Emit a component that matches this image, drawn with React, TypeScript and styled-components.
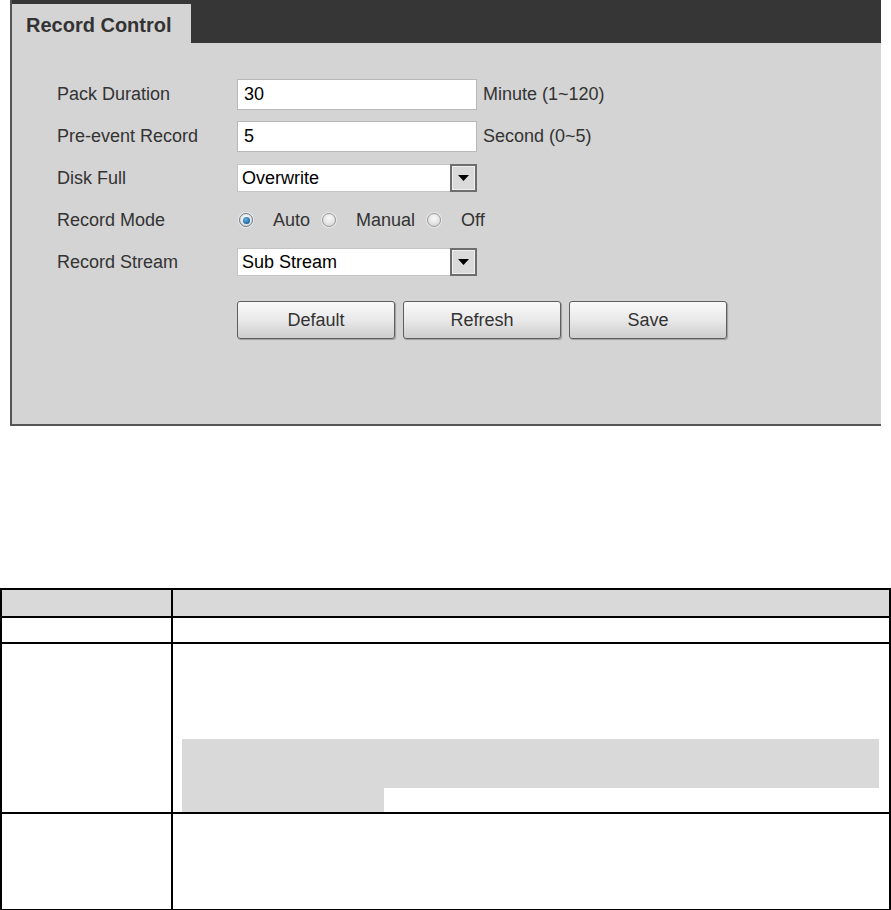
import React from "react";
import styled, { createGlobalStyle } from "styled-components";

const GlobalStyle = createGlobalStyle`
  html, body {
    margin: 0;
    padding: 0;
    background: #ffffff;
  }
  body {
    font-family: "Liberation Sans", Arial, sans-serif;
  }
`;

const Page = styled.div`
  width: 891px;
  display: flex;
  flex-direction: column;
`;

const Panel = styled.div`
  margin-left: 10px;
  width: 869px;
  background: #d4d4d4;
  border-left: 2px solid #555555;
  border-bottom: 2px solid #555555;
  padding-bottom: 85px;
`;

const TabBar = styled.div`
  display: flex;
  align-items: flex-end;
  height: 43px;
  background: #363636;
`;

const Tab = styled.div`
  display: flex;
  align-items: center;
  box-sizing: border-box;
  width: 179px;
  height: 39px;
  padding: 3px 0 0 14px;
  background: #d4d4d4;
  color: #333333;
  font-size: 20px;
  font-weight: bold;
`;

const Form = styled.div`
  display: flex;
  flex-direction: column;
  padding: 30px 0 0 45px;
`;

const Row = styled.div`
  display: grid;
  grid-template-columns: 180px auto;
  align-items: center;
  height: 42px;
`;

const Label = styled.div`
  font-size: 18px;
  color: #333333;
`;

const Field = styled.div`
  display: flex;
  align-items: center;
`;

const TextInput = styled.div`
  box-sizing: border-box;
  width: 240px;
  height: 31px;
  display: flex;
  align-items: center;
  padding-left: 6px;
  background: #ffffff;
  border: 1px solid #b8b8b8;
  font-size: 18px;
  color: #000000;
`;

const Unit = styled.span`
  margin-left: 6px;
  font-size: 18px;
  color: #333333;
`;

const Select = styled.div`
  box-sizing: border-box;
  width: 240px;
  height: 28px;
  display: flex;
  align-items: stretch;
  background: #ffffff;
  border: 1px solid #c4c4c4;
  border-right: none;
`;

const SelectValue = styled.div`
  flex: 1;
  display: flex;
  align-items: center;
  padding-left: 4px;
  font-size: 18px;
  color: #000000;
`;

const SelectArrow = styled.div`
  box-sizing: border-box;
  width: 27px;
  margin-top: -1px;
  margin-bottom: -1px;
  display: flex;
  align-items: center;
  justify-content: center;
  background: #dadada;
  border: 2px solid #6e6e6e;
  box-shadow: inset 0 0 0 1px #efefef;
`;

const RadioGroup = styled.div`
  display: flex;
  align-items: center;
  gap: 12px;
  padding-left: 2px;
`;

const Option = styled.label`
  display: flex;
  align-items: center;
  gap: 20px;
  font-size: 18px;
  color: #333333;
`;

const RadioDot = styled.span<{ $checked?: boolean }>`
  box-sizing: border-box;
  width: 14px;
  height: 14px;
  border-radius: 50%;
  display: flex;
  align-items: center;
  justify-content: center;
  border: 1px solid ${({ $checked }) => ($checked ? "#6f7c88" : "#9a9a9a")};
  background: radial-gradient(circle at 50% 35%, #fafafa 0%, #e2e2e2 60%, #c9c9c9 100%);
  box-shadow: 0 0 0 1px rgba(255, 255, 255, 0.5);

  &::after {
    content: "";
    display: ${({ $checked }) => ($checked ? "block" : "none")};
    width: 7px;
    height: 7px;
    border-radius: 50%;
    background: radial-gradient(circle at 40% 35%, #5fb2e6 0%, #1d6aa3 70%, #154f7c 100%);
  }
`;

const Buttons = styled.div`
  display: flex;
  gap: 8px;
  margin: 18px 0 0 180px;
`;

const Button = styled.button`
  box-sizing: border-box;
  width: 158px;
  height: 38px;
  padding: 0;
  border: 1px solid #5e5e5e;
  border-radius: 3px;
  background: linear-gradient(#fafafa 0%, #e9e9e9 50%, #cdcdcd 100%);
  box-shadow: 1px 1px 1px rgba(0, 0, 0, 0.25);
  font-family: "Liberation Sans", Arial, sans-serif;
  font-size: 18px;
  color: #333333;
`;

const Spacer = styled.div`
  height: 162px;
`;

const Table = styled.table`
  width: 891px;
  border-collapse: collapse;
  table-layout: fixed;
`;

const HeadCell = styled.th<{ $width?: number }>`
  height: 26px;
  padding: 0;
  background: #d9d9d9;
  border: 2px solid #000000;
  width: ${({ $width }) => ($width ? `${$width}px` : "auto")};
`;

const Cell = styled.td<{ $height: number }>`
  height: ${({ $height }) => $height}px;
  padding: 0 10px 0 9px;
  border: 2px solid #000000;
  vertical-align: bottom;
`;

const NoteBlock = styled.div`
  display: flex;
  flex-direction: column;
`;

const Highlight = styled.div<{ $width?: number; $height: number }>`
  height: ${({ $height }) => $height}px;
  width: ${({ $width }) => ($width ? `${$width}px` : "100%")};
  background: #d9d9d9;
`;

const ArrowIcon = () => (
  <svg width="11" height="6" viewBox="0 0 11 6">
    <path d="M0 0 H11 L5.5 6 Z" fill="#000000" />
  </svg>
);

const Radio: React.FC<{ label: string; checked?: boolean }> = ({ label, checked }) => (
  <Option>
    <RadioDot $checked={checked} />
    {label}
  </Option>
);

const App: React.FC = () => {
  return (
    <Page>
      <GlobalStyle />
      <Panel>
        <TabBar>
          <Tab>Record Control</Tab>
        </TabBar>
        <Form>
          <Row>
            <Label>Pack Duration</Label>
            <Field>
              <TextInput>30</TextInput>
              <Unit>Minute (1~120)</Unit>
            </Field>
          </Row>
          <Row>
            <Label>Pre-event Record</Label>
            <Field>
              <TextInput>5</TextInput>
              <Unit>Second (0~5)</Unit>
            </Field>
          </Row>
          <Row>
            <Label>Disk Full</Label>
            <Field>
              <Select>
                <SelectValue>Overwrite</SelectValue>
                <SelectArrow>
                  <ArrowIcon />
                </SelectArrow>
              </Select>
            </Field>
          </Row>
          <Row>
            <Label>Record Mode</Label>
            <RadioGroup>
              <Radio label="Auto" checked />
              <Radio label="Manual" />
              <Radio label="Off" />
            </RadioGroup>
          </Row>
          <Row>
            <Label>Record Stream</Label>
            <Field>
              <Select>
                <SelectValue>Sub Stream</SelectValue>
                <SelectArrow>
                  <ArrowIcon />
                </SelectArrow>
              </Select>
            </Field>
          </Row>
          <Buttons>
            <Button>Default</Button>
            <Button>Refresh</Button>
            <Button>Save</Button>
          </Buttons>
        </Form>
      </Panel>
      <Spacer />
      <Table>
        <thead>
          <tr>
            <HeadCell $width={169} />
            <HeadCell />
          </tr>
        </thead>
        <tbody>
          <tr>
            <Cell $height={24} />
            <Cell $height={24} />
          </tr>
          <tr>
            <Cell $height={168} />
            <Cell $height={168}>
              <NoteBlock>
                <Highlight $height={49} />
                <Highlight $height={24} $width={202} />
              </NoteBlock>
            </Cell>
          </tr>
          <tr>
            <Cell $height={95} />
            <Cell $height={95} />
          </tr>
        </tbody>
      </Table>
    </Page>
  );
};

export default App;
